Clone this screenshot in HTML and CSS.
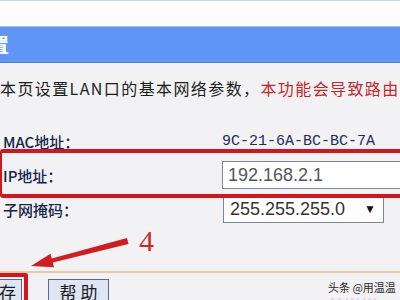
FILE: index.html
```html
<!DOCTYPE html>
<html lang="zh">
<head>
    <meta charset="UTF-8">
    <title>LAN口设置</title>
    <link rel="stylesheet" href="styles.css">
</head>
<body>
    <div class="page">
        <div class="top-strip"></div>
        <div class="title-bar"><span class="title-text">设置</span></div>
        <div class="content">
            <div class="intro">本页设置LAN口的基本网络参数，<span class="warn">本功能会导致路由器重新启动。</span></div>
            <div class="rows">
                <div class="row">
                    <div class="label">MAC地址：</div>
                    <div class="mac">9C-21-6A-BC-BC-7A</div>
                </div>
                <div class="row">
                    <div class="label">IP地址：</div>
                    <div class="field">192.168.2.1</div>
                </div>
                <div class="row">
                    <div class="label">子网掩码：</div>
                    <div class="select"><span>255.255.255.0</span><span class="caret">▼</span></div>
                </div>
            </div>
        </div>
        <div class="footer">
            <div class="btn btn-save">保存</div>
            <div class="btn btn-help">帮 助</div>
        </div>

        <!-- annotations drawn over the screenshot -->
        <div class="mark-ip"></div>
        <div class="mark-save"></div>
        <svg class="arrow" width="400" height="300" viewBox="0 0 400 300">
            <polygon points="31,266 50.5,253.7 51.8,258.6 127,238.1 128.5,243.9 52.8,262.4 54,267.3" fill="#d31c1f"/>
        </svg>
        <div class="step">4</div>
        <div class="watermark">头条 @用温温</div>
        <div class="watermark-faint">MWW</div>
    </div>
</body>
</html>
```

FILE: styles.css
```css
body {
    margin: 0;
    font-family: "Noto Sans CJK SC", sans-serif;
}

.page {
    position: relative;
    width: 400px;
    height: 300px;
    overflow: hidden;
    background: #f2f2f4;
}

.top-strip {
    height: 25px;
    background: #fdfdfd;
    border-top: 1px solid #c9d4e2;
    border-bottom: 1px solid #b3bfd0;
}

.title-bar {
    height: 35px;
    background: #6095f8;
    border-bottom: 1px solid #4b7edd;
    color: #ffffff;
    font-size: 20px;
    line-height: 35px;
    font-weight: bold;
}

.title-text {
    margin-left: -31px;
}

.content {
    padding-top: 14px;
}

.intro {
    font-size: 16px;
    line-height: 22px;
    color: #1c1c1c;
    white-space: nowrap;
    letter-spacing: 1.4px;
}

.warn {
    color: #c3262b;
}

.rows {
    margin-top: 25px;
}

.row {
    display: grid;
    grid-template-columns: 222px 1fr;
    align-items: center;
    height: 34px;
}

.label {
    padding-left: 3px;
    font-size: 15px;
    font-weight: 500;
    color: #17264c;
}

.mac {
    font-family: "Liberation Mono", monospace;
    font-size: 15px;
    color: #1d2c58;
}

.field {
    height: 26px;
    width: 190px;
    border: 1px solid #7f8792;
    background: #ffffff;
    font-family: "Liberation Sans", sans-serif;
    font-size: 18px;
    line-height: 26px;
    color: #555555;
    padding-left: 5px;
}

.select {
    display: flex;
    justify-content: space-between;
    width: 146px;
    height: 25px;
    margin-left: 1px;
    border: 1px solid #7a889a;
    background: #ffffff;
    font-family: "Liberation Sans", sans-serif;
    font-size: 18px;
    line-height: 25px;
    color: #333333;
    padding: 0 7px 0 6px;
}

.caret {
    font-size: 12px;
    color: #111111;
}

.footer {
    display: flex;
    gap: 26px;
    margin-top: 45px;
    border-top: 2px solid #ebc8a5;
    padding-top: 6px;
}

.btn {
    height: 24px;
    border: 1px solid #5b6a88;
    background: #dfe5f3;
    font-size: 17px;
    line-height: 24px;
    color: #1a1a1a;
    text-align: center;
}

.btn-save {
    width: 44px;
    margin-left: -24px;
}

.btn-help {
    width: 59px;
}

.mark-ip {
    position: absolute;
    left: 0;
    top: 149px;
    width: 420px;
    height: 41px;
    border: 4px solid #d3161d;
    border-left-width: 2px;
    border-radius: 3px;
}

.mark-save {
    position: absolute;
    left: -10px;
    top: 273px;
    width: 30px;
    height: 40px;
    border: 4px solid #d3161d;
    border-radius: 2px;
}

.arrow {
    position: absolute;
    left: 0;
    top: 0;
}

.step {
    position: absolute;
    left: 139px;
    top: 224px;
    font-family: "Liberation Serif", serif;
    font-size: 30px;
    color: #cf2a2a;
}

.watermark {
    position: absolute;
    left: 328px;
    top: 280px;
    font-size: 11px;
    line-height: 14px;
    color: #2b2b2b;
}

.watermark-faint {
    position: absolute;
    left: 330px;
    top: 296px;
    font-family: "Liberation Sans", sans-serif;
    font-size: 14px;
    line-height: 14px;
    font-weight: bold;
    letter-spacing: 4px;
    color: #e4d6ee;
}
```
